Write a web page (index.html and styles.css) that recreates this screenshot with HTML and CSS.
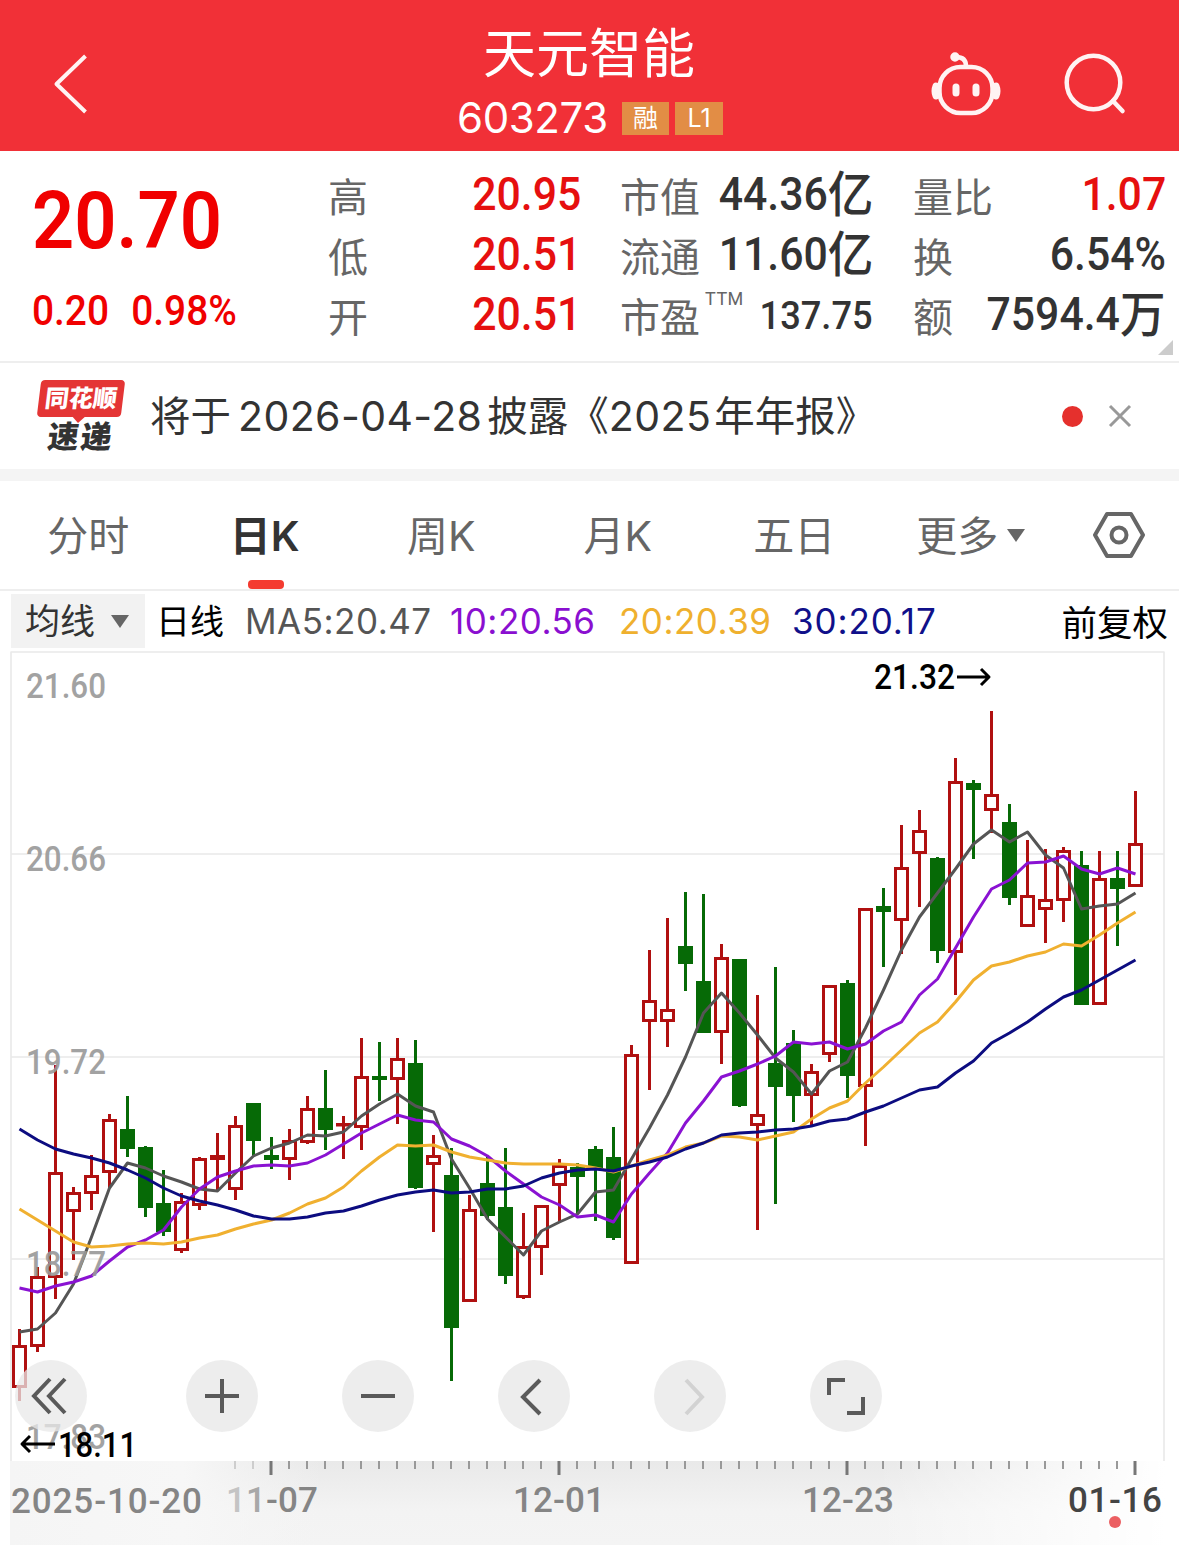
FILE: index.html
```html
<!DOCTYPE html>
<html lang="zh-CN">
<head>
  <meta charset="UTF-8">
  <title>天元智能 603273</title>
  <link rel="stylesheet" href="styles.css">
</head>
<body>
  <header class="topbar">
    <svg class="back" width="36" height="64" viewBox="0 0 36 64"><path d="M33.500 4 L4.500 32 L33.500 60"/></svg>
    <div class="title">
      <h1>天元智能</h1>
      <div class="code"><span class="num">603273</span><span class="tag">融</span><span class="tag">L1</span></div>
    </div>
    <div class="actions">
      <svg width="72" height="66" viewBox="0 0 72 66">
        <circle cx="25" cy="6" r="2.5"/>
        <path d="M26 6 Q36 6 36 15"/>
        <rect x="9.500" y="16" width="53" height="46" rx="21"/>
        <path d="M6 35 Q4 40 6 45 M66 35 Q68 40 66 45" stroke-width="7"/>
        <path d="M26 36 V42 M46 36 V42" stroke-width="7"/>
      </svg>
      <svg width="64" height="64" viewBox="0 0 64 64">
        <circle cx="29.5" cy="31.5" r="26.8"/>
        <path d="M49 50 L58.5 60"/>
      </svg>
    </div>
  </header>

  <section class="quote">
    <div class="price">
      <div class="last">20.70</div>
      <div class="change"><span>0.20</span><span>0.98%</span></div>
    </div>
    <dl class="stats first">
      <div><dt>高</dt><dd class="up">20.95</dd></div>
      <div><dt>低</dt><dd class="up">20.51</dd></div>
      <div><dt>开</dt><dd class="up">20.51</dd></div>
    </dl>
    <dl class="stats">
      <div><dt>市值</dt><dd>44.36<i>亿</i></dd></div>
      <div><dt>流通</dt><dd>11.60<i>亿</i></dd></div>
      <div><dt>市盈<sup>TTM</sup></dt><dd class="small">137.75</dd></div>
    </dl>
    <dl class="stats">
      <div><dt>量比</dt><dd class="up">1.07</dd></div>
      <div><dt>换</dt><dd>6.54%</dd></div>
      <div><dt>额</dt><dd>7594.4<i>万</i></dd></div>
    </dl>
    <span class="corner"></span>
  </section>

  <section class="news">
    <div class="logo">
      <span class="logo-top">同花顺</span>
      <span class="logo-bottom">速递</span>
    </div>
    <p>将于<b>2026-04-28</b>披露《<b class="year">2025</b>年年报》</p>
    <span class="dot"></span>
    <svg class="close" width="24" height="24" viewBox="0 0 24 24"><path d="M2 2 L22 22 M22 2 L2 22"/></svg>
  </section>

  <nav class="tabs">
    <a>分时</a>
    <a class="active">日K</a>
    <a>周K</a>
    <a>月K</a>
    <a>五日</a>
    <a>更多<span class="caret"></span></a>
    <svg width="52" height="46" viewBox="0 0 52 46">
      <path d="M14 2 H38 L50 23 L38 44 H14 L2 23 Z"/>
      <circle cx="26" cy="23" r="7.5"/>
    </svg>
  </nav>

  <div class="legend">
    <span class="select">均线<span class="caret"></span></span>
    <span class="period">日线</span>
    <span class="ma ma5">MA5:20.47</span>
    <span class="ma ma10">10:20.56</span>
    <span class="ma ma20">20:20.39</span>
    <span class="ma ma30">30:20.17</span>
    <span class="adjust">前复权</span>
  </div>

  <main class="chart">
    <svg id="kline" width="1179" height="894" viewBox="0 651 1179 894">
      <defs>
        <linearGradient id="axisDown" x1="0" y1="0" x2="0" y2="1">
          <stop offset="0" stop-color="#e9e9e9"/>
          <stop offset="0.6" stop-color="#f3f3f3"/>
          <stop offset="1" stop-color="#f4f4f4"/>
        </linearGradient>
        <linearGradient id="axisFade" x1="0" y1="0" x2="1" y2="0">
          <stop offset="0" stop-color="#f5f5f5"/>
          <stop offset="0.15" stop-color="#f7f7f7"/>
          <stop offset="0.27" stop-color="#f5f5f5" stop-opacity="0"/>
          <stop offset="0.75" stop-color="#fff" stop-opacity="0"/>
          <stop offset="1" stop-color="#fff"/>
        </linearGradient>
      </defs>
      <rect x="10" y="1461" width="1155" height="84" fill="url(#axisDown)"/>
      <rect x="10" y="1461" width="1155" height="84" fill="url(#axisFade)"/>
      <path class="grid" d="M11 1461 V652 H1164 V1461 M11 854 H1164 M11 1057 H1164 M11 1259 H1164"/>
      <g id="candles"></g>
      <g id="averages"></g>
      <g id="ticks"></g>
      <g class="scale">
        <text x="26" y="698" textLength="80" lengthAdjust="spacingAndGlyphs">21.60</text>
        <text x="26" y="871" textLength="80" lengthAdjust="spacingAndGlyphs">20.66</text>
        <text x="26" y="1074" textLength="80" lengthAdjust="spacingAndGlyphs">19.72</text>
        <text x="26" y="1276" textLength="80" lengthAdjust="spacingAndGlyphs">18.77</text>
        <text x="26" y="1449" textLength="80" lengthAdjust="spacingAndGlyphs">17.83</text>
      </g>
      <g class="extreme">
        <text x="874" y="689" textLength="81" lengthAdjust="spacingAndGlyphs">21.32</text>
        <path d="M957 677 H989 M981 669 L989 677 L981 685"/>
        <text x="58" y="1457" textLength="79" lengthAdjust="spacingAndGlyphs">18.11</text>
        <path d="M55 1444 H22 M30 1436 L22 1444 L30 1452"/>
      </g>
      <g class="dates">
        <text x="11" y="1513" textLength="191">2025-10-20</text>
        <text x="226" y="1512" textLength="92"><tspan fill="#c4c4c4">1</tspan><tspan fill="#a8a8a8">1</tspan>-07</text>
        <text x="513" y="1512" textLength="92">12-01</text>
        <text x="802" y="1512" textLength="92">12-23</text>
        <text class="today" x="1068" y="1512" textLength="94">01-16</text>
      </g>
      <circle cx="1115" cy="1522" r="6" fill="#eb5f62"/>
    </svg>
    <div class="tools">
      <button class="rewind"><svg viewBox="0 0 72 72"><path d="M50 19 L34 36 L50 53 M35 19 L19 36 L35 53"/></svg></button>
      <button><svg viewBox="0 0 72 72"><path d="M19 36 H53 M36 19 V53"/></svg></button>
      <button><svg viewBox="0 0 72 72"><path d="M19 36 H53"/></svg></button>
      <button><svg viewBox="0 0 72 72"><path d="M42 20 L25 37 L42 54"/></svg></button>
      <button class="off"><svg viewBox="0 0 72 72"><path d="M32 20 L48 37 L32 54"/></svg></button>
      <button><svg viewBox="0 0 72 72"><path d="M19 35 V20 H35 M53 37 V53 H37"/></svg></button>
    </div>
  </main>

  <script src="chart.js"></script>
</body>
</html>
```
FILE: styles.css
```css
* {
  box-sizing: border-box;
}
body {
  margin: 0;
  width: 1179px;
  height: 1545px;
  overflow: hidden;
  background: #fff;
  color: #333;
  font-family: Inter, 'Noto Sans CJK SC', sans-serif;
}
h1, p, dl, dd {
  margin: 0;
}
svg {
  display: block;
  fill: none;
  stroke-linejoin: round;
}

/* Red top bar */
.topbar {
  display: flex;
  height: 151px;
  padding: 0 51px 0 52px;
  background: #f13037;
  color: #fff;
}
.topbar svg {
  stroke: #fff3f3;
  stroke-width: 4.5;
  stroke-linecap: round;
}
.topbar .back {
  margin-top: 52px;
  stroke-width: 4;
  stroke-linecap: butt;
}
.title {
  width: 268px;
  margin-left: 367px;
}
h1 {
  padding-top: 22px;
  text-align: center;
  font-size: 53px;
  font-weight: 400;
  line-height: 64px;
}
.code {
  display: flex;
  align-items: center;
  height: 65px;
  gap: 6px;
}
.code .num {
  width: 162px;
  margin-top: -2px;
  padding-left: 2px;
  font-size: 42px;
  letter-spacing: -0.4px;
}
.tag {
  width: 48px;
  height: 33px;
  background: #e28d45;
  font-size: 25px;
  line-height: 32px;
  text-align: center;
}
.actions {
  display: flex;
  gap: 62px;
  margin-left: auto;
}
.actions svg {
  margin-top: 51px;
}

/* Quote numbers */
.quote {
  position: relative;
  display: flex;
  height: 212px;
  padding: 13px 13px 0 32px;
  border-bottom: 2px solid #eee;
  font-family: Roboto, 'Noto Sans CJK SC', sans-serif;
  font-weight: 500;
}
.price {
  width: 296px;
  color: #f00000;
}
.last,
.change {
  transform: scaleX(0.925);
  transform-origin: left;
}
.last {
  padding-top: 12px;
  font-size: 80px;
  font-weight: 600;
  line-height: 90px;
}
.change {
  display: flex;
  gap: 24px;
  margin-top: 22px;
  font-size: 42px;
  line-height: 46px;
}
.stats {
  width: 253px;
  margin-right: 40px;
}
.stats.first {
  margin-right: 39px;
}
.stats > div {
  display: flex;
  justify-content: space-between;
  height: 60px;
  line-height: 60px;
}
dt {
  padding-top: 5px;
  color: #666;
  font-size: 40px;
  font-weight: 400;
  white-space: nowrap;
}
dt sup {
  margin-left: 5px;
  font-size: 18px;
  line-height: 0;
  vertical-align: 27px;
  letter-spacing: 0.5px;
}
dd {
  font-size: 46px;
  white-space: nowrap;
  transform: scaleX(0.93);
  transform-origin: right;
}
dd i {
  font-size: 49px;
  font-style: normal;
  line-height: 1;
  vertical-align: -2px;
}
dd.small {
  padding-top: 2px;
  font-size: 39px;
}
.stats:last-of-type {
  margin-right: 0;
}
.up {
  color: #e60f0f;
}
.corner {
  position: absolute;
  right: 6px;
  bottom: 6px;
  border-left: 15px solid transparent;
  border-bottom: 15px solid #ccc;
}

/* News strip */
.news {
  display: flex;
  align-items: center;
  height: 118px;
  padding: 0 47px 0 39px;
  border-bottom: 12px solid #f4f4f4;
}
.logo {
  width: 84px;
  margin-right: 27px;
  font-weight: 900;
  line-height: 1;
  text-align: center;
}
.logo-top,
.logo-bottom {
  display: block;
  transform: skewX(-7deg);
}
.logo-top {
  position: relative;
  height: 37px;
  border-radius: 4px;
  background: #e43535;
  color: #fff;
  font-size: 24px;
  line-height: 37px;
}
.logo-top::after {
  content: '';
  position: absolute;
  left: 36px;
  bottom: -6px;
  border: 6px solid transparent;
  border-top-color: #e43535;
  border-bottom: 0;
}
.logo-bottom {
  margin-top: 4px;
  font-size: 31px;
  letter-spacing: 2px;
}
.news p {
  flex: 1;
  margin-top: -5px;
  font-size: 40.5px;
}
.news b {
  margin: 0 5px 0 7px;
  font-size: 41px;
  font-weight: 400;
  letter-spacing: 0.4px;
}
.news .year {
  margin-left: 0;
  margin-right: 3px;
}
.dot {
  width: 21px;
  height: 21px;
  margin-right: 25px;
  border-radius: 50%;
  background: #e5302d;
}
.close {
  stroke: #999;
  stroke-width: 3;
}

/* Period tabs */
.tabs {
  display: flex;
  align-items: center;
  height: 110px;
  border-bottom: 2px solid #eee;
}
.tabs a {
  position: relative;
  width: 176.5px;
  padding-top: 3px;
  color: #666;
  font-size: 41px;
  line-height: 105px;
  text-align: center;
}
.tabs .active {
  color: #333;
  font-weight: 600;
}
.tabs .active::after {
  content: '';
  position: absolute;
  left: 71px;
  bottom: 0;
  width: 36px;
  height: 9px;
  border-radius: 4px;
  background: #f43b30;
}
.tabs svg {
  margin-left: 34px;
  stroke: #666;
  stroke-width: 4;
}
.caret {
  display: inline-block;
  margin-left: 9px;
  border: 9px solid transparent;
  border-top: 13px solid #666;
  border-bottom: 0;
  vertical-align: 9px;
}

/* Moving average legend */
.legend {
  display: flex;
  align-items: center;
  height: 60px;
  padding: 0 11px;
  color: #000;
  font-size: 35px;
}
.select {
  width: 134px;
  height: 54px;
  padding-left: 14px;
  background: #f2f2f2;
  color: #333;
  line-height: 54px;
}
.select .caret {
  margin-left: 16px;
  vertical-align: 6px;
}
.period {
  width: 100px;
  margin-top: -4px;
  padding-left: 11px;
  font-size: 34px;
}
.ma {
  letter-spacing: 0.5px;
}
.ma5 { width: 205px; color: #555; }
.ma10 { width: 169px; color: #8a0fd0; }
.ma20 { width: 173px; color: #efb02e; }
.ma30 { color: #10108a; letter-spacing: 0.9px; }
.adjust {
  margin-left: auto;
  margin-top: -2px;
  font-size: 35.5px;
}

/* Candles, averages and axis */
.chart {
  position: relative;
}
.grid {
  stroke: #e9e9e9;
  stroke-width: 1.6;
}
#candles path,
#candles rect {
  stroke-width: 3;
  stroke-linejoin: miter;
}
#candles .rise { stroke: #b01010; }
#candles rect.rise { fill: #fff; }
#candles .fall { stroke: #066a06; }
#candles rect.fall { fill: #066a06; }
#averages path { stroke-width: 3; }
#ticks path { stroke: #999; stroke-width: 2; }
#ticks .major { stroke: #777; stroke-width: 3; }
.chart text {
  font-family: Roboto, sans-serif;
  font-size: 35px;
  font-weight: 500;
}
.scale {
  fill: #999;
  opacity: 0.9;
}
.extreme {
  fill: #000;
}
.extreme path {
  fill: none;
  stroke: #000;
  stroke-width: 3;
}
.dates {
  fill: #858585;
}
.dates .today {
  fill: #444;
}

/* Round buttons over the chart */
.tools {
  position: absolute;
  left: 15px;
  top: 709px;
  display: flex;
  gap: 84px;
}
.tools button {
  width: 72px;
  height: 72px;
  padding: 0;
  border: 0;
  border-radius: 50%;
  background: rgba(235, 235, 235, 0.9);
}
.tools .rewind {
  margin-right: 15px;
  background: rgba(232, 232, 232, 0.75);
}
.tools svg {
  stroke: #5a5a5a;
  stroke-width: 4;
  stroke-linejoin: miter;
}
.tools .off svg {
  stroke: #d2d2d2;
}
```
FILE: chart.js
```js
const NS = 'http://www.w3.org/2000/svg';
const STEP = 18;
const FIRST_X = 19.5;

// direction, high, body top, body bottom, low
const candles = [
  ['r', 1329, 1345, 1388, 1401], ['r', 1267, 1276, 1347, 1352], ['r', 1065, 1172, 1278, 1299],
  ['r', 1187, 1192, 1212, 1260], ['r', 1155, 1175, 1194, 1210], ['r', 1114, 1119, 1173, 1188],
  ['f', 1096, 1129, 1149, 1157], ['f', 1146, 1147, 1208, 1217], ['f', 1170, 1203, 1232, 1236],
  ['r', 1193, 1201, 1251, 1253], ['r', 1157, 1158, 1206, 1210], ['r', 1133, 1155, 1160, 1190],
  ['r', 1116, 1125, 1190, 1200], ['f', 1103, 1103, 1141, 1157], ['f', 1137, 1155, 1160, 1169],
  ['r', 1129, 1140, 1160, 1180], ['r', 1096, 1108, 1143, 1144], ['f', 1070, 1108, 1130, 1150],
  ['r', 1116, 1123, 1126, 1159], ['r', 1038, 1076, 1128, 1150], ['f', 1042, 1076, 1080, 1101],
  ['r', 1038, 1058, 1080, 1124], ['f', 1040, 1063, 1188, 1189], ['r', 1135, 1155, 1165, 1232],
  ['f', 1148, 1175, 1328, 1381], ['r', 1195, 1209, 1302, 1302], ['f', 1157, 1183, 1216, 1220],
  ['f', 1148, 1207, 1276, 1284], ['r', 1213, 1246, 1298, 1299], ['r', 1205, 1205, 1248, 1275],
  ['r', 1159, 1165, 1186, 1222], ['f', 1163, 1167, 1177, 1213], ['f', 1146, 1149, 1168, 1221],
  ['f', 1127, 1157, 1238, 1240], ['r', 1045, 1054, 1264, 1264], ['r', 950, 1000, 1022, 1090],
  ['r', 918, 1009, 1022, 1047], ['f', 892, 946, 964, 991], ['f', 894, 981, 1033, 1033],
  ['r', 944, 957, 1033, 1064], ['f', 959, 959, 1106, 1107], ['r', 995, 1114, 1126, 1230],
  ['f', 967, 1063, 1087, 1204], ['f', 1030, 1043, 1096, 1122], ['r', 1064, 1071, 1096, 1125],
  ['r', 985, 985, 1055, 1062], ['f', 980, 983, 1076, 1098], ['r', 908, 908, 1087, 1146],
  ['f', 888, 906, 912, 967], ['r', 825, 867, 921, 954], ['r', 810, 830, 854, 907],
  ['f', 857, 858, 951, 963], ['r', 758, 781, 953, 995], ['f', 780, 783, 790, 859],
  ['r', 711, 794, 811, 833], ['f', 804, 822, 898, 905], ['r', 840, 895, 927, 927],
  ['r', 849, 899, 910, 943], ['r', 847, 850, 901, 922], ['f', 851, 865, 1005, 1005],
  ['r', 851, 878, 1005, 1005], ['f', 851, 878, 889, 946], ['r', 791, 843, 887, 887]
];

const averages = {
  '#555555': [1332, 1329, 1313, 1284, 1237, 1188, 1163, 1168, 1176, 1182, 1189, 1191, 1173, 1156, 1148, 1143,
    1135, 1136, 1132, 1116, 1104, 1094, 1106, 1112, 1159, 1188, 1219, 1237, 1255, 1231, 1222, 1214,
    1192, 1190, 1159, 1128, 1095, 1057, 1013, 993, 1013, 1035, 1058, 1072, 1094, 1071, 1062, 1028,
    990, 950, 917, 893, 869, 844, 830, 842, 832, 855, 868, 909, 906, 904, 893],
  '#8a12d2': [1288, 1292, 1286, 1282, 1276, 1261, 1247, 1240, 1230, 1207, 1189, 1177, 1171, 1166, 1165, 1166,
    1163, 1155, 1144, 1133, 1124, 1115, 1120, 1122, 1139, 1146, 1156, 1171, 1184, 1197, 1205, 1217,
    1215, 1222, 1194, 1173, 1153, 1123, 1101, 1077, 1071, 1064, 1056, 1042, 1044, 1042, 1049, 1044,
    1031, 1022, 995, 979, 948, 917, 889, 880, 863, 862, 856, 869, 874, 868, 874],
  '#f0b030': [1209, 1220, 1231, 1242, 1247, 1246, 1244, 1243, 1244, 1242, 1238, 1235, 1229, 1224, 1220, 1213,
    1204, 1198, 1187, 1171, 1157, 1145, 1146, 1145, 1152, 1157, 1160, 1163, 1164, 1164, 1164, 1165,
    1168, 1172, 1166, 1160, 1155, 1147, 1143, 1136, 1137, 1140, 1136, 1132, 1119, 1108, 1101, 1083,
    1067, 1050, 1033, 1022, 1002, 980, 966, 962, 956, 952, 944, 946, 935, 923, 912],
  '#0c0c80': [1129, 1140, 1149, 1154, 1158, 1163, 1170, 1178, 1188, 1196, 1201, 1205, 1210, 1216, 1219, 1219,
    1217, 1213, 1211, 1206, 1200, 1195, 1192, 1190, 1193, 1192, 1189, 1189, 1186, 1178, 1173, 1170,
    1169, 1171, 1166, 1162, 1157, 1149, 1143, 1135, 1133, 1132, 1130, 1129, 1126, 1121, 1119, 1112,
    1106, 1098, 1090, 1087, 1073, 1061, 1043, 1033, 1022, 1009, 997, 990, 980, 970, 960]
};

function add(parent, tag, attrs) {
  const el = document.createElementNS(NS, tag);
  for (const key in attrs) el.setAttribute(key, attrs[key]);
  document.getElementById(parent).appendChild(el);
}

candles.forEach(([dir, high, top, bottom, low], i) => {
  const x = FIRST_X + i * STEP;
  const cls = dir === 'r' ? 'rise' : 'fall';
  add('candles', 'path', { class: cls, d: `M${x} ${high} V${low}` });
  add('candles', 'rect', {
    class: cls, x: x - 6, y: top + 1.5, width: 12, height: Math.max(bottom - top - 3, 0.5)
  });
});

for (const color in averages) {
  const points = averages[color].map((y, i) => `${FIRST_X + i * STEP} ${y}`);
  add('averages', 'path', { stroke: color, d: 'M' + points.join(' L') });
}

// One tick per trading day, a longer one above each date
for (let i = 12; i < candles.length; i++) {
  const major = (i + 2) % 16 === 0;
  add('ticks', 'path', {
    class: major ? 'major' : 'minor',
    opacity: i < 14 ? 0.4 : 1,
    d: `M${FIRST_X - 0.5 + i * STEP} 1461 V${major ? 1475 : 1469}`
  });
}
```
